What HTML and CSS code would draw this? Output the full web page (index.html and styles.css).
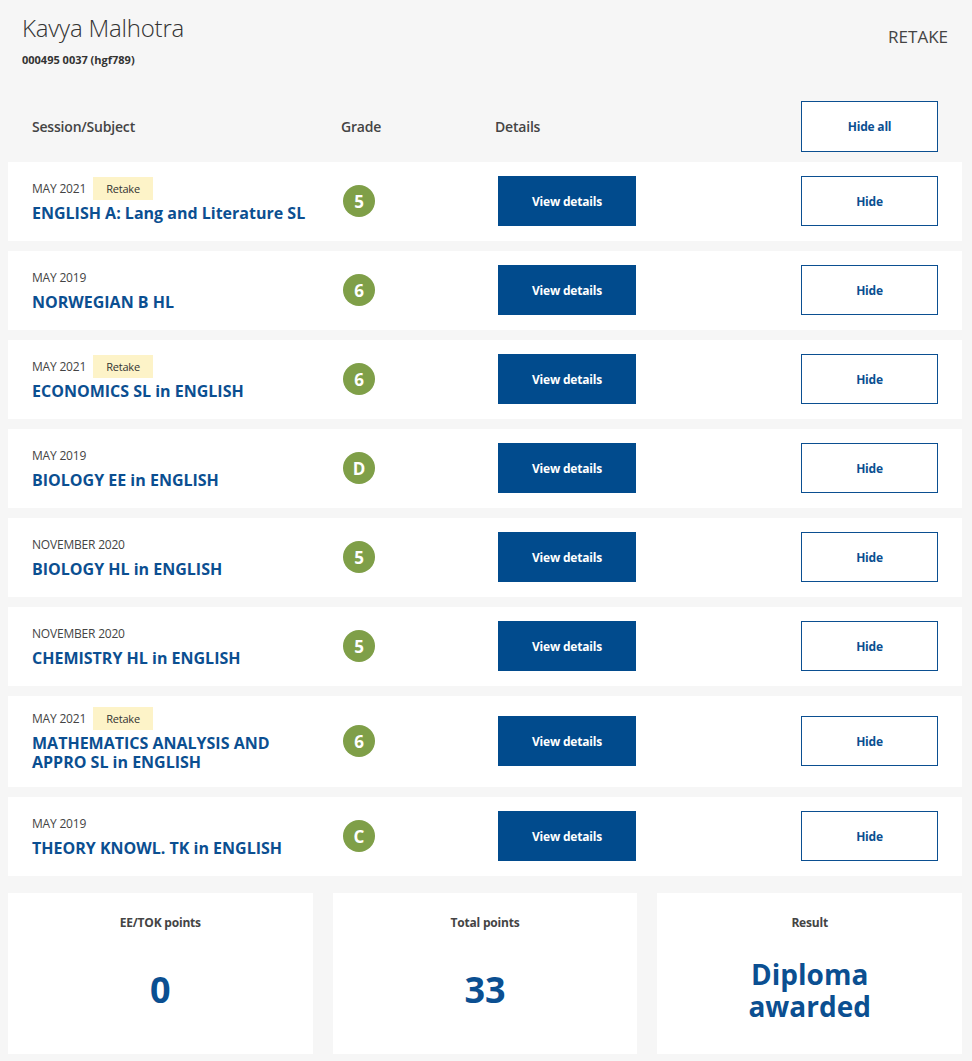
FILE: index.html
```html
<!DOCTYPE html>
<html lang="en">
<head>
<meta charset="utf-8">
<title>Results - Kavya Malhotra</title>
<link rel="stylesheet" href="styles.css">
</head>
<body>
<div class="page">
  <header class="top">
    <div class="who">
      <h1 class="name">Kavya Malhotra</h1>
      <div class="cand">000495 0037 (hgf789)</div>
    </div>
    <div class="status">RETAKE</div>
  </header>

  <div class="table">
    <div class="grid thead">
      <div class="th">Session/Subject</div>
      <div class="th">Grade</div>
      <div class="th th-details">Details</div>
      <div class="cell-hide"><button class="btn-outline tall">Hide all</button></div>
    </div>

    <div class="grid row">
      <div class="subject">
        <div class="session"><span>MAY 2021</span><span class="badge">Retake</span></div>
        <div class="title">ENGLISH A: Lang and Literature SL</div>
      </div>
      <div class="grade"><span class="circle">5</span></div>
      <div class="details"><button class="btn-solid">View details</button></div>
      <div class="cell-hide"><button class="btn-outline">Hide</button></div>
    </div>

    <div class="grid row">
      <div class="subject">
        <div class="session"><span>MAY 2019</span></div>
        <div class="title">NORWEGIAN B HL</div>
      </div>
      <div class="grade"><span class="circle">6</span></div>
      <div class="details"><button class="btn-solid">View details</button></div>
      <div class="cell-hide"><button class="btn-outline">Hide</button></div>
    </div>

    <div class="grid row">
      <div class="subject">
        <div class="session"><span>MAY 2021</span><span class="badge">Retake</span></div>
        <div class="title">ECONOMICS SL in ENGLISH</div>
      </div>
      <div class="grade"><span class="circle">6</span></div>
      <div class="details"><button class="btn-solid">View details</button></div>
      <div class="cell-hide"><button class="btn-outline">Hide</button></div>
    </div>

    <div class="grid row">
      <div class="subject">
        <div class="session"><span>MAY 2019</span></div>
        <div class="title">BIOLOGY EE in ENGLISH</div>
      </div>
      <div class="grade"><span class="circle">D</span></div>
      <div class="details"><button class="btn-solid">View details</button></div>
      <div class="cell-hide"><button class="btn-outline">Hide</button></div>
    </div>

    <div class="grid row">
      <div class="subject">
        <div class="session"><span>NOVEMBER 2020</span></div>
        <div class="title">BIOLOGY HL in ENGLISH</div>
      </div>
      <div class="grade"><span class="circle">5</span></div>
      <div class="details"><button class="btn-solid">View details</button></div>
      <div class="cell-hide"><button class="btn-outline">Hide</button></div>
    </div>

    <div class="grid row">
      <div class="subject">
        <div class="session"><span>NOVEMBER 2020</span></div>
        <div class="title">CHEMISTRY HL in ENGLISH</div>
      </div>
      <div class="grade"><span class="circle">5</span></div>
      <div class="details"><button class="btn-solid">View details</button></div>
      <div class="cell-hide"><button class="btn-outline">Hide</button></div>
    </div>

    <div class="grid row">
      <div class="subject">
        <div class="session"><span>MAY 2021</span><span class="badge">Retake</span></div>
        <div class="title">MATHEMATICS ANALYSIS AND APPRO SL in ENGLISH</div>
      </div>
      <div class="grade"><span class="circle">6</span></div>
      <div class="details"><button class="btn-solid">View details</button></div>
      <div class="cell-hide"><button class="btn-outline">Hide</button></div>
    </div>

    <div class="grid row">
      <div class="subject">
        <div class="session"><span>MAY 2019</span></div>
        <div class="title">THEORY KNOWL. TK in ENGLISH</div>
      </div>
      <div class="grade"><span class="circle">C</span></div>
      <div class="details"><button class="btn-solid">View details</button></div>
      <div class="cell-hide"><button class="btn-outline">Hide</button></div>
    </div>
  </div>

  <div class="summary">
    <div class="card">
      <div class="card-label">EE/TOK points</div>
      <div class="card-value">0</div>
    </div>
    <div class="card">
      <div class="card-label">Total points</div>
      <div class="card-value">33</div>
    </div>
    <div class="card">
      <div class="card-label">Result</div>
      <div class="card-value text">Diploma awarded</div>
    </div>
  </div>
</div>
</body>
</html>
```

FILE: styles.css
```css
* { box-sizing: border-box; }

html, body {
  margin: 0;
  padding: 0;
  background: #f6f6f6;
}

body {
  font-family: "Open Sans", "Noto Sans", "Liberation Sans", sans-serif;
  color: #444;
}

.page {
  width: 954px;
  margin-left: 8px;
  padding-bottom: 6px;
}

.top {
  display: flex;
  justify-content: space-between;
  align-items: flex-start;
  padding: 12px 14px 0 14px;
  height: 101px;
}

.name {
  margin: 0;
  font-size: 24px;
  font-weight: 300;
  line-height: 32px;
  color: #333;
  letter-spacing: -0.2px;
}

.cand {
  margin-top: 8px;
  font-size: 11px;
  font-weight: 700;
  color: #333;
}

.status {
  margin-top: 14px;
  font-size: 17px;
  line-height: 22px;
  color: #444;
}

.table {
  display: flex;
  flex-direction: column;
  gap: 10px;
}

.grid {
  display: grid;
  grid-template-columns: 309px 154px 306px 137px;
  padding: 0 24px;
  align-items: center;
}

.thead {
  height: 51px;
}

.th {
  font-size: 14px;
  font-weight: 600;
  color: #444;
  letter-spacing: -0.2px;
}

.row {
  background: #fff;
  padding-top: 14px;
  padding-bottom: 15px;
}

.subject {
  margin-top: -3px;
}

.session {
  display: flex;
  align-items: center;
  height: 23px;
  font-size: 12px;
  color: #444;
  letter-spacing: -0.2px;
}

.badge {
  margin-left: 7px;
  width: 60px;
  height: 23px;
  display: inline-flex;
  align-items: center;
  justify-content: center;
  background: #fdf3c8;
  font-size: 11px;
  color: #333;
}

.title {
  margin-top: 4px;
  font-size: 16px;
  line-height: 19px;
  font-weight: 700;
  color: #0b4f91;
  padding-right: 20px;
}

.grade {
  padding-left: 2px;
}

.circle {
  display: inline-flex;
  align-items: center;
  justify-content: center;
  width: 32px;
  height: 32px;
  border-radius: 50%;
  background: #7f9f48;
  color: #fff;
  font-weight: 700;
  font-size: 17px;
}

.details {
  padding-left: 3px;
}

.btn-solid,
.btn-outline {
  font-family: inherit;
  font-size: 12px;
  font-weight: 700;
  width: 138px;
  height: 50px;
  cursor: pointer;
  letter-spacing: -0.2px;
}

.btn-solid {
  background: #014b8d;
  color: #fff;
  border: 0;
}

.btn-outline {
  width: 137px;
  background: #fff;
  color: #0b4f91;
  border: 1px solid #0b4f91;
}

.btn-outline.tall {
  height: 51px;
}

.summary {
  margin-top: 17px;
  display: grid;
  grid-template-columns: repeat(3, 1fr);
  gap: 20px;
}

.card {
  background: #fff;
  height: 161px;
  display: flex;
  flex-direction: column;
  align-items: center;
  padding-top: 21px;
}

.card-label {
  font-size: 12px;
  font-weight: 700;
  color: #444;
  letter-spacing: -0.2px;
}

.card-value {
  flex: 1;
  display: flex;
  align-items: center;
  justify-content: center;
  text-align: center;
  font-size: 36px;
  font-weight: 700;
  color: #0b4f91;
  padding-bottom: 6px;
}

.card-value.text {
  font-size: 28px;
  line-height: 32px;
  width: 150px;
}
```
